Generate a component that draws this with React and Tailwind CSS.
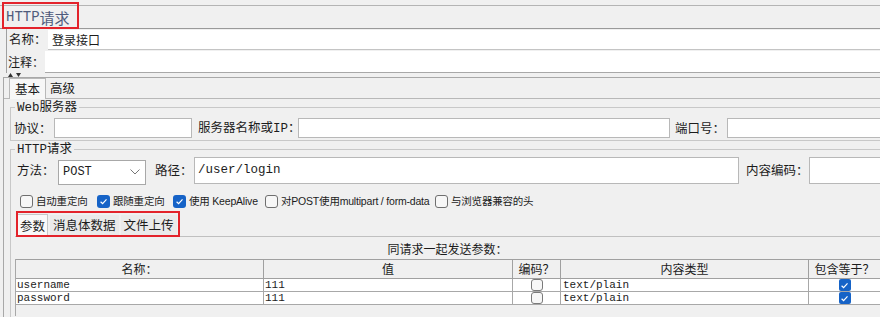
import React from "react";

function Box({ checked, size = 13 }) {
  if (checked) {
    return (
      <span className={size === 13 ? "inline-flex w-[13px] h-[13px] rounded-[3px] bg-[#1663c7] items-center justify-center shrink-0" : "inline-flex w-[12px] h-[12px] rounded-[2px] bg-[#1663c7] items-center justify-center shrink-0"}>
        <svg width="9" height="9" viewBox="0 0 9 9">
          <path d="M1.6 4.7 L3.6 6.6 L7.5 2.4" fill="none" stroke="white" strokeWidth="1.2" />
        </svg>
      </span>
    );
  }
  return <span className={size === 13 ? "inline-block w-[13px] h-[13px] rounded-[3px] border border-[#6f6f6f] bg-[#f7f7f7] shrink-0" : "inline-block w-[12px] h-[12px] rounded-[3px] border border-[#7a7a7a] bg-[#f7f7f7] shrink-0"} />;
}

const M = "font-['Liberation_Mono','Noto_Sans_CJK_SC',monospace]";

function CheckItem({ checked, w, children }) {
  return (
    <div className={`flex items-center gap-[3px] ${w}`}>
      <Box checked={checked} />
      <span className="text-[10.5px] leading-none whitespace-nowrap font-['Liberation_Sans','Noto_Sans_CJK_SC',sans-serif] tracking-[-0.2px]">{children}</span>
    </div>
  );
}

function Row({ name, value }) {
  return (
    <div className="flex h-[13px] bg-white border-b border-[#a8a8a8] text-[11px] leading-[12px]">
      <div className={`w-[248px] border-r border-[#a8a8a8] pl-[1px] ${M}`}>{name}</div>
      <div className={`w-[249px] border-r border-[#a8a8a8] pl-[1px] ${M}`}>{value}</div>
      <div className="w-[48px] border-r border-[#a8a8a8] flex justify-center items-start">
        <Box checked={false} size={12} />
      </div>
      <div className={`w-[248px] border-r border-[#a8a8a8] pl-[2px] ${M}`}>text/plain</div>
      <div className="flex-1 flex justify-center items-start">
        <Box checked={true} size={12} />
      </div>
    </div>
  );
}

export default function App() {
  return (
    <div className="w-[892px] h-[323px] bg-white overflow-hidden text-[#1c1c1c] font-['Noto_Sans_CJK_SC',sans-serif]">
      <div className="relative w-[880px] h-[317px] bg-[#f0f0f0] flex flex-col overflow-hidden">
        {/* title */}
        <div className="h-[29px] shrink-0 pt-[5px] border-b border-[#9a9a9a]">
          <div className="h-[23px] border-t border-[#b4b4b4] flex items-center pl-[6px] text-[#4f5b7c] text-[15px] leading-none">
            <span className="font-['Liberation_Mono',monospace] text-[14px]">HTTP</span>
            <span>请求</span>
          </div>
        </div>
        <div className="absolute left-[2px] top-[2px] w-[77px] h-[27px] border-2 border-[#e3232b]" />

        {/* name / comment */}
        <div className="ml-[6px] border-l border-[#a0a0a0] shrink-0">
          <div className="h-[21px] flex items-stretch">
            <div className="w-[41px] pl-[2px] flex items-center text-[12.5px] leading-none whitespace-nowrap">名称：</div>
            <div className="flex-1 mt-[1px] bg-white border-b border-[#c4c4c4] flex items-center pl-[4px] text-[12px] leading-none">登录接口</div>
          </div>
          <div className="h-[23px] flex items-stretch">
            <div className="w-[38px] pl-[1px] flex items-center text-[12px] leading-none whitespace-nowrap">注释：</div>
            <div className="flex-1 mt-[1px] bg-white border-b border-[#a8a8a8]" />
          </div>
        </div>

        {/* divider */}
        <div className="h-[4px] shrink-0 flex items-center pl-[8px] gap-[3px]">
          <svg width="5" height="4" viewBox="0 0 5 4"><path d="M0 4 L2.5 0 L5 4 Z" fill="#333" /></svg>
          <svg width="5" height="4" viewBox="0 0 5 4"><path d="M0 0 L2.5 4 L5 0 Z" fill="#333" /></svg>
        </div>

        {/* tab panel */}
        <div className="flex-1 flex flex-col border-t border-[#8c8c8c] ml-[3px] border-l border-[#a8a8a8] min-h-0">
          <div className="h-[21px] flex items-end shrink-0">
            <div className="w-[5px] h-full border-b border-[#b8b8b8]" />
            <div className="h-[21px] px-[5px] border-l border-t border-r border-[#b8b8b8] bg-[#f7f7f7] flex items-center text-[12.5px] leading-none">基本</div>
            <div className="h-[20px] px-[4px] flex items-center text-[12.5px] leading-none border-b border-[#b8b8b8]">高级</div>
            <div className="flex-1 h-full border-b border-[#b8b8b8]" />
          </div>

          <div className="flex-1 pl-[6px] flex flex-col min-h-0">
            {/* Web server */}
            <fieldset className="border border-r-0 border-[#c8c8c8] pl-[3px] pb-[2px] shrink-0">
              <legend className="px-[2px] ml-[1px] text-[12.5px] leading-[14px]">
                <span className={M}>Web</span>服务器
              </legend>
              <div className="flex items-center h-[20px] mt-[3px]">
                <div className="w-[40px] text-[12.5px] leading-none whitespace-nowrap">协议：</div>
                <div className="w-[138px] h-[20px] bg-white border border-[#b8b8b8]" />
                <div className="w-[106px] pl-[6px] text-[12.5px] leading-none whitespace-nowrap">服务器名称或<span className={M}>IP</span>：</div>
                <div className="w-[372px] h-[20px] bg-white border border-[#b8b8b8]" />
                <div className="w-[57px] pl-[5px] text-[12.5px] leading-none whitespace-nowrap">端口号：</div>
                <div className="flex-1 h-[20px] bg-white border border-r-0 border-[#b8b8b8]" />
              </div>
            </fieldset>

            {/* HTTP request */}
            <fieldset className="flex-1 border border-r-0 border-b-0 border-[#c8c8c8] pl-[3px] min-h-0">
              <legend className="px-[2px] ml-[1px] text-[12.5px] leading-[14px]">
                <span className={M}>HTTP</span>请求
              </legend>
              <div className="flex items-center h-[27px]">
                <div className="w-[44px] pl-[3px] text-[12.5px] leading-none whitespace-nowrap">方法：</div>
                <div className="w-[88px] h-[25px] mt-[3px] bg-white border border-[#a8a8a8] flex items-center justify-between pl-[4px] pr-[5px]">
                  <span className={`text-[12px] leading-none ${M}`}>POST</span>
                  <svg width="10" height="6" viewBox="0 0 10 6"><path d="M0.5 0.5 L5 5 L9.5 0.5" fill="none" stroke="#777" strokeWidth="1" /></svg>
                </div>
                <div className="w-[48px] pl-[9px] text-[12.5px] leading-none whitespace-nowrap">路径：</div>
                <div className={`w-[545px] h-[27px] bg-white border border-[#b8b8b8] flex items-center pl-[3px] text-[12.5px] leading-none ${M}`}>/user/login</div>
                <div className="w-[70px] pl-[7px] text-[12.5px] leading-none whitespace-nowrap">内容编码：</div>
                <div className="flex-1 h-[27px] bg-white border border-r-0 border-[#b8b8b8]" />
              </div>

              <div className="flex items-center h-[13px] mt-[11px] pl-[6px]">
                <CheckItem checked={false} w="w-[77px]">自动重定向</CheckItem>
                <CheckItem checked={true} w="w-[76px]">跟随重定向</CheckItem>
                <CheckItem checked={true} w="w-[92px]">使用 KeepAlive</CheckItem>
                <CheckItem checked={false} w="w-[170px]">对POST使用multipart / form-data</CheckItem>
                <CheckItem checked={false} w="w-[110px]">与浏览器兼容的头</CheckItem>
              </div>

              {/* sub tabs */}
              <div className="ml-[1px] mt-[5px] flex flex-col">
                <div className="relative h-[24px] flex items-end">
                  <div className="w-[2px] h-full border-b border-[#c0c0c0]" />
                  <div className="h-[23px] px-[2px] bg-[#f9f9f9] border-l border-t border-r border-[#c8c8c8] flex items-center text-[12.5px] leading-none">参数</div>
                  <div className="h-[22px] ml-[2px] px-[3px] bg-[#eaeaea] border-b border-[#c0c0c0] flex items-center text-[12.5px] leading-none">消息体数据</div>
                  <div className="h-[22px] ml-[2px] px-[3px] bg-[#eaeaea] border-b border-[#c0c0c0] flex items-center text-[12.5px] leading-none">文件上传</div>
                  <div className="flex-1 h-full border-b border-[#c0c0c0]" />
                  <div className="absolute left-[1px] top-[-2px] w-[164px] h-[26px] border-2 border-[#e3232b]" />
                </div>
                <div className="h-[17px] mt-[3px] flex items-center justify-center text-[12px] leading-none">同请求一起发送参数：</div>
                <div className="mt-[2px] border-l border-[#a8a8a8]">
                  <div className="flex h-[20px] border-t border-b border-[#a0a0a0] text-[12px] leading-none">
                    <div className="w-[248px] border-r border-[#a0a0a0] flex items-center justify-center">名称：</div>
                    <div className="w-[249px] border-r border-[#a0a0a0] flex items-center justify-center">值</div>
                    <div className="w-[48px] border-r border-[#a0a0a0] flex items-center justify-center">编码？</div>
                    <div className="w-[248px] border-r border-[#a0a0a0] flex items-center justify-center">内容类型</div>
                    <div className="flex-1 flex items-center justify-center whitespace-nowrap">包含等于？</div>
                  </div>
                  <Row name="username" value="111" />
                  <Row name="password" value="111" />
                  <div className="h-[11px]" />
                </div>
              </div>
            </fieldset>
          </div>
        </div>
      </div>
    </div>
  );
}
